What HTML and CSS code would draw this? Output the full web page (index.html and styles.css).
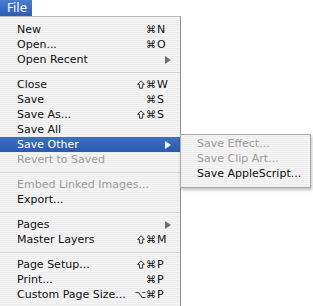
FILE: index.html
```html
<!DOCTYPE html>
<html lang="en">
  <head>
    <meta charset="UTF-8" />
    <title>File menu</title>
    <link rel="stylesheet" href="styles.css">
  </head>
  <body>
    <!-- Menu bar -->
    <div class="menubar">
      <span class="menu-title">File</span>
    </div>

    <!-- File menu -->
    <ul class="menu">
      <li class="item"><span class="label">New</span><span class="mods">⌘</span><span class="key">N</span></li>
      <li class="item"><span class="label">Open...</span><span class="mods">⌘</span><span class="key">O</span></li>
      <li class="item"><span class="label">Open Recent</span><span class="arrow"></span></li>
      <li class="sep"></li>
      <li class="item"><span class="label">Close</span><span class="mods"><svg class="shift" viewBox="0 0 8 9"><path d="M4 0.8 L7.4 4.4 H5.6 V8.2 H2.4 V4.4 H0.6 Z" /></svg>⌘</span><span class="key">W</span></li>
      <li class="item"><span class="label">Save</span><span class="mods">⌘</span><span class="key">S</span></li>
      <li class="item"><span class="label">Save As...</span><span class="mods"><svg class="shift" viewBox="0 0 8 9"><path d="M4 0.8 L7.4 4.4 H5.6 V8.2 H2.4 V4.4 H0.6 Z" /></svg>⌘</span><span class="key">S</span></li>
      <li class="item"><span class="label">Save All</span></li>
      <li class="item selected"><span class="label">Save Other</span><span class="arrow"></span></li>
      <li class="item disabled"><span class="label">Revert to Saved</span></li>
      <li class="sep"></li>
      <li class="item disabled"><span class="label">Embed Linked Images...</span></li>
      <li class="item"><span class="label">Export...</span></li>
      <li class="sep"></li>
      <li class="item"><span class="label">Pages</span><span class="arrow"></span></li>
      <li class="item"><span class="label">Master Layers</span><span class="mods"><svg class="shift" viewBox="0 0 8 9"><path d="M4 0.8 L7.4 4.4 H5.6 V8.2 H2.4 V4.4 H0.6 Z" /></svg>⌘</span><span class="key">M</span></li>
      <li class="sep"></li>
      <li class="item"><span class="label">Page Setup...</span><span class="mods"><svg class="shift" viewBox="0 0 8 9"><path d="M4 0.8 L7.4 4.4 H5.6 V8.2 H2.4 V4.4 H0.6 Z" /></svg>⌘</span><span class="key">P</span></li>
      <li class="item"><span class="label">Print...</span><span class="mods">⌘</span><span class="key">P</span></li>
      <li class="item"><span class="label">Custom Page Size...</span><span class="mods">⌥⌘</span><span class="key">P</span></li>
    </ul>

    <!-- Save Other submenu -->
    <ul class="submenu">
      <li class="item disabled"><span class="label">Save Effect...</span></li>
      <li class="item disabled"><span class="label">Save Clip Art...</span></li>
      <li class="item"><span class="label">Save AppleScript...</span></li>
    </ul>
  </body>
</html>
```

FILE: styles.css
```css
/* Basic Reset */
* {
  margin: 0;
  padding: 0;
  box-sizing: border-box;
}

body {
  font-family: "DejaVu Sans", "Liberation Sans", sans-serif;
  font-size: 11px;
  background-color: #fff;
  color: #111;
  position: relative;
  height: 306px;
  overflow: hidden;
}

/* Menu bar title */
.menubar {
  height: 16px;
  display: flex;
}

.menu-title {
  width: 32px;
  height: 16px;
  line-height: 16px;
  padding-left: 7px;
  font-size: 12px;
  color: #fff;
  background: linear-gradient(#4a7ccb, #2c5db4);
}

/* Menus */
.menu,
.submenu {
  list-style: none;
  background: repeating-linear-gradient(#f5f5f5 0 1px, #ececec 1px 2px);
}

.menu {
  width: 181px;
  height: 300px;
  padding-top: 5px;
  border-top: 1px solid #b8b8b8;
  border-right: 1px solid #8e8e8e;
}

.submenu {
  position: absolute;
  left: 180px;
  top: 134px;
  width: 131px;
  height: 54px;
  padding-top: 1px;
  border: 1px solid #a8a8a8;
  box-shadow: 1px 2px 3px rgba(0, 0, 0, 0.25);
}

.item {
  display: flex;
  align-items: center;
  height: 15px;
  padding-left: 17px;
  padding-right: 14px;
  white-space: nowrap;
}

.submenu .item {
  padding-left: 16px;
}

.label {
  flex: 1;
}

.mods {
  display: flex;
  align-items: center;
  gap: 1px;
  font-size: 10px;
  padding-right: 1px;
}

.shift {
  width: 8px;
  height: 9px;
  fill: none;
  stroke: #222;
  stroke-width: 0.9;
}

.key {
  width: 9px;
}

.arrow {
  width: 0;
  height: 0;
  margin-right: -5px;
  border-top: 4px solid transparent;
  border-bottom: 4px solid transparent;
  border-left: 6px solid #707070;
}

.selected {
  color: #fff;
  background: linear-gradient(#3d6fc2, #2a5aae);
}

.selected .arrow {
  border-left-color: #fff;
}

.disabled {
  color: #9c9c9c;
}

.sep {
  height: 10px;
  display: flex;
  align-items: center;
}

.sep::after {
  content: "";
  flex: 1;
  height: 1px;
  background-color: #d2d2d2;
}
```
